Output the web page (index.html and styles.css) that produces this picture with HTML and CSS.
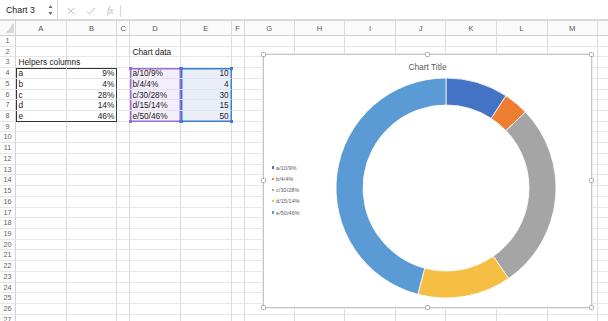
FILE: index.html
```html
<!DOCTYPE html>
<html lang="en">
<head>
<meta charset="utf-8">
<title>Chart 3</title>
<link rel="stylesheet" href="styles.css">
</head>
<body>
<div class="formula-bar">
  <div class="name-box">
    <span class="name">Chart 3</span>
    <svg class="spin" width="5" height="12" viewBox="0 0 5 12"><path d="M2.5 1 L4.5 4 L0.5 4 Z M0.5 8 L4.5 8 L2.5 11 Z" fill="#6b6b6b"/></svg>
  </div>
  <div class="tools">
    <svg class="ic-x" width="8" height="8" viewBox="0 0 8 8"><path d="M0.8 0.8 L7.2 7.2 M7.2 0.8 L0.8 7.2" stroke="#c3c3c3" stroke-width="1" fill="none"/></svg>
    <svg class="ic-ok" width="10" height="8" viewBox="0 0 10 8"><path d="M0.8 4.2 L3.6 7 L9.2 0.8" stroke="#c3c3c3" stroke-width="1" fill="none"/></svg>
    <span class="fx">fx</span>
    <span class="divider"></span>
  </div>
  <div class="formula-input"></div>
</div>

<div class="sheet-wrap">
  <div class="sheet">
    <div class="corner"></div>
    <div class="ch">A</div><div class="ch">B</div><div class="ch">C</div><div class="ch">D</div><div class="ch">E</div><div class="ch">F</div><div class="ch">G</div><div class="ch">H</div><div class="ch">I</div><div class="ch">J</div><div class="ch">K</div><div class="ch">L</div><div class="ch">M</div><div class="ch">N</div>

    <div class="rh">1</div><div class="c"></div><div class="c"></div><div class="c"></div><div class="c"></div><div class="c"></div><div class="c"></div><div class="c"></div><div class="c"></div><div class="c"></div><div class="c"></div><div class="c"></div><div class="c"></div><div class="c"></div><div class="c"></div>
    <div class="rh">2</div><div class="c"></div><div class="c"></div><div class="c"></div><div class="c">Chart data</div><div class="c"></div><div class="c"></div><div class="c"></div><div class="c"></div><div class="c"></div><div class="c"></div><div class="c"></div><div class="c"></div><div class="c"></div><div class="c"></div>
    <div class="rh">3</div><div class="c">Helpers columns</div><div class="c"></div><div class="c"></div><div class="c"></div><div class="c"></div><div class="c"></div><div class="c"></div><div class="c"></div><div class="c"></div><div class="c"></div><div class="c"></div><div class="c"></div><div class="c"></div><div class="c"></div>
    <div class="rh">4</div><div class="c bxLT">a</div><div class="c num bxT bxR">9%</div><div class="c"></div><div class="c sp first">a/10/9%</div><div class="c num sb first">10</div><div class="c"></div><div class="c"></div><div class="c"></div><div class="c"></div><div class="c"></div><div class="c"></div><div class="c"></div><div class="c"></div><div class="c"></div>
    <div class="rh">5</div><div class="c bxL">b</div><div class="c num bxR">4%</div><div class="c"></div><div class="c sp">b/4/4%</div><div class="c num sb">4</div><div class="c"></div><div class="c"></div><div class="c"></div><div class="c"></div><div class="c"></div><div class="c"></div><div class="c"></div><div class="c"></div><div class="c"></div>
    <div class="rh">6</div><div class="c bxL">c</div><div class="c num bxR">28%</div><div class="c"></div><div class="c sp">c/30/28%</div><div class="c num sb">30</div><div class="c"></div><div class="c"></div><div class="c"></div><div class="c"></div><div class="c"></div><div class="c"></div><div class="c"></div><div class="c"></div><div class="c"></div>
    <div class="rh">7</div><div class="c bxL">d</div><div class="c num bxR">14%</div><div class="c"></div><div class="c sp">d/15/14%</div><div class="c num sb">15</div><div class="c"></div><div class="c"></div><div class="c"></div><div class="c"></div><div class="c"></div><div class="c"></div><div class="c"></div><div class="c"></div><div class="c"></div>
    <div class="rh">8</div><div class="c bxL bxB">e</div><div class="c num bxR bxB">46%</div><div class="c"></div><div class="c sp last">e/50/46%</div><div class="c num sb last">50</div><div class="c"></div><div class="c"></div><div class="c"></div><div class="c"></div><div class="c"></div><div class="c"></div><div class="c"></div><div class="c"></div><div class="c"></div>
    <div class="rh">9</div><div class="c"></div><div class="c"></div><div class="c"></div><div class="c"></div><div class="c"></div><div class="c"></div><div class="c"></div><div class="c"></div><div class="c"></div><div class="c"></div><div class="c"></div><div class="c"></div><div class="c"></div><div class="c"></div>
    <div class="rh">10</div><div class="c"></div><div class="c"></div><div class="c"></div><div class="c"></div><div class="c"></div><div class="c"></div><div class="c"></div><div class="c"></div><div class="c"></div><div class="c"></div><div class="c"></div><div class="c"></div><div class="c"></div><div class="c"></div>
    <div class="rh">11</div><div class="c"></div><div class="c"></div><div class="c"></div><div class="c"></div><div class="c"></div><div class="c"></div><div class="c"></div><div class="c"></div><div class="c"></div><div class="c"></div><div class="c"></div><div class="c"></div><div class="c"></div><div class="c"></div>
    <div class="rh">12</div><div class="c"></div><div class="c"></div><div class="c"></div><div class="c"></div><div class="c"></div><div class="c"></div><div class="c"></div><div class="c"></div><div class="c"></div><div class="c"></div><div class="c"></div><div class="c"></div><div class="c"></div><div class="c"></div>
    <div class="rh">13</div><div class="c"></div><div class="c"></div><div class="c"></div><div class="c"></div><div class="c"></div><div class="c"></div><div class="c"></div><div class="c"></div><div class="c"></div><div class="c"></div><div class="c"></div><div class="c"></div><div class="c"></div><div class="c"></div>
    <div class="rh">14</div><div class="c"></div><div class="c"></div><div class="c"></div><div class="c"></div><div class="c"></div><div class="c"></div><div class="c"></div><div class="c"></div><div class="c"></div><div class="c"></div><div class="c"></div><div class="c"></div><div class="c"></div><div class="c"></div>
    <div class="rh">15</div><div class="c"></div><div class="c"></div><div class="c"></div><div class="c"></div><div class="c"></div><div class="c"></div><div class="c"></div><div class="c"></div><div class="c"></div><div class="c"></div><div class="c"></div><div class="c"></div><div class="c"></div><div class="c"></div>
    <div class="rh">16</div><div class="c"></div><div class="c"></div><div class="c"></div><div class="c"></div><div class="c"></div><div class="c"></div><div class="c"></div><div class="c"></div><div class="c"></div><div class="c"></div><div class="c"></div><div class="c"></div><div class="c"></div><div class="c"></div>
    <div class="rh">17</div><div class="c"></div><div class="c"></div><div class="c"></div><div class="c"></div><div class="c"></div><div class="c"></div><div class="c"></div><div class="c"></div><div class="c"></div><div class="c"></div><div class="c"></div><div class="c"></div><div class="c"></div><div class="c"></div>
    <div class="rh">18</div><div class="c"></div><div class="c"></div><div class="c"></div><div class="c"></div><div class="c"></div><div class="c"></div><div class="c"></div><div class="c"></div><div class="c"></div><div class="c"></div><div class="c"></div><div class="c"></div><div class="c"></div><div class="c"></div>
    <div class="rh">19</div><div class="c"></div><div class="c"></div><div class="c"></div><div class="c"></div><div class="c"></div><div class="c"></div><div class="c"></div><div class="c"></div><div class="c"></div><div class="c"></div><div class="c"></div><div class="c"></div><div class="c"></div><div class="c"></div>
    <div class="rh">20</div><div class="c"></div><div class="c"></div><div class="c"></div><div class="c"></div><div class="c"></div><div class="c"></div><div class="c"></div><div class="c"></div><div class="c"></div><div class="c"></div><div class="c"></div><div class="c"></div><div class="c"></div><div class="c"></div>
    <div class="rh">21</div><div class="c"></div><div class="c"></div><div class="c"></div><div class="c"></div><div class="c"></div><div class="c"></div><div class="c"></div><div class="c"></div><div class="c"></div><div class="c"></div><div class="c"></div><div class="c"></div><div class="c"></div><div class="c"></div>
    <div class="rh">22</div><div class="c"></div><div class="c"></div><div class="c"></div><div class="c"></div><div class="c"></div><div class="c"></div><div class="c"></div><div class="c"></div><div class="c"></div><div class="c"></div><div class="c"></div><div class="c"></div><div class="c"></div><div class="c"></div>
    <div class="rh">23</div><div class="c"></div><div class="c"></div><div class="c"></div><div class="c"></div><div class="c"></div><div class="c"></div><div class="c"></div><div class="c"></div><div class="c"></div><div class="c"></div><div class="c"></div><div class="c"></div><div class="c"></div><div class="c"></div>
    <div class="rh">24</div><div class="c"></div><div class="c"></div><div class="c"></div><div class="c"></div><div class="c"></div><div class="c"></div><div class="c"></div><div class="c"></div><div class="c"></div><div class="c"></div><div class="c"></div><div class="c"></div><div class="c"></div><div class="c"></div>
    <div class="rh">25</div><div class="c"></div><div class="c"></div><div class="c"></div><div class="c"></div><div class="c"></div><div class="c"></div><div class="c"></div><div class="c"></div><div class="c"></div><div class="c"></div><div class="c"></div><div class="c"></div><div class="c"></div><div class="c"></div>
    <div class="rh">26</div><div class="c"></div><div class="c"></div><div class="c"></div><div class="c"></div><div class="c"></div><div class="c"></div><div class="c"></div><div class="c"></div><div class="c"></div><div class="c"></div><div class="c"></div><div class="c"></div><div class="c"></div><div class="c"></div>
    <div class="rh">27</div><div class="c"></div><div class="c"></div><div class="c"></div><div class="c"></div><div class="c"></div><div class="c"></div><div class="c"></div><div class="c"></div><div class="c"></div><div class="c"></div><div class="c"></div><div class="c"></div><div class="c"></div><div class="c"></div>
  </div>

  <div class="chart">
    <span class="hd h-tl"></span><span class="hd h-tm"></span><span class="hd h-tr"></span>
    <span class="hd h-ml"></span><span class="hd h-mr"></span>
    <span class="hd h-bl"></span><span class="hd h-bm"></span><span class="hd h-br"></span>
    <div class="chart-title">Chart Title</div>
    <div class="chart-body">
      <ul class="legend">
        <li><span class="mk mk-a"></span>a/10/9%</li>
        <li><span class="mk mk-b"></span>b/4/4%</li>
        <li><span class="mk mk-c"></span>c/30/28%</li>
        <li><span class="mk mk-d"></span>d/15/14%</li>
        <li><span class="mk mk-e"></span>e/50/46%</li>
      </ul>
      <svg class="donut" width="220" height="220" viewBox="0 0 220 220">
        <g stroke="#ffffff" stroke-width="0.8" stroke-linejoin="round">
          <path fill="#4472C4" d="M110 0 A110 110 0 0 1 169.96 17.78 L155.24 40.41 A83 83 0 0 0 110 27 Z"/>
          <path fill="#ED7D31" d="M169.96 17.78 A110 110 0 0 1 189.45 33.92 L169.95 52.59 A83 83 0 0 0 155.24 40.41 Z"/>
          <path fill="#A5A5A5" d="M189.45 33.92 A110 110 0 0 1 172.59 200.46 L157.23 178.26 A83 83 0 0 0 169.95 52.59 Z"/>
          <path fill="#F7BE44" d="M172.59 200.46 A110 110 0 0 1 81.79 216.32 L88.71 190.22 A83 83 0 0 0 157.23 178.26 Z"/>
          <path fill="#5B9BD5" d="M81.79 216.32 A110 110 0 0 1 110 0 L110 27 A83 83 0 0 0 88.71 190.22 Z"/>
        </g>
      </svg>
    </div>
  </div>
</div>
</body>
</html>
```

FILE: styles.css
```css
* { box-sizing: border-box; margin: 0; padding: 0; }
html, body { width: 608px; height: 321px; overflow: hidden; background: #ffffff; }
body { font-family: "Liberation Sans", Arial, sans-serif; color: #1c1c1c; }

/* formula bar */
.formula-bar {
  height: 21px;
  display: flex;
  align-items: stretch;
  border-bottom: 2px solid #d9d9d9;
  background: #ffffff;
}
.name-box {
  width: 58px;
  display: flex;
  align-items: center;
  justify-content: space-between;
  padding: 1px 4px 0 6px;
  border-right: 1px solid #d6d6d6;
  font-size: 8.8px;
  color: #222222;
}
.tools {
  display: flex;
  align-items: center;
  padding: 2px 0 0 9px;
}
.ic-x { margin-right: 11px; }
.ic-ok { margin-right: 11px; }
.fx {
  font-family: "Liberation Serif", "Times New Roman", serif;
  font-style: italic;
  font-size: 10px;
  color: #bdbdbd;
  width: 10px;
  letter-spacing: -0.5px;
}
.divider {
  width: 1px;
  height: 12px;
  background: #dadada;
  margin-left: 3px;
}
.formula-input { flex: 1; }

/* sheet */
.sheet-wrap {
  position: relative;
  height: 300px;
  overflow: hidden;
}
.sheet {
  display: grid;
  grid-template-columns: 16px 50.7px 50.6px 12.7px 51px 50.7px 13px 50.3px 50.3px 50.7px 50.3px 50.7px 50.6px 50.4px 50px;
  grid-template-rows: 15px repeat(27, 10.73px);
  width: 680px;
}
.corner {
  background: #fafafa linear-gradient(to bottom right, transparent 50%, #d7d7d7 50%) no-repeat right 1px bottom 2px / 8px 11px;
  border-right: 1px solid #d4d4d4;
  border-bottom: 1px solid #cfcfcf;
}
.ch {
  background: #fafafa;
  font-size: 7.6px;
  color: #555555;
  text-align: center;
  line-height: 15px;
  border-right: 1px solid #dcdcdc;
  border-bottom: 1px solid #cfcfcf;
}
.rh {
  font-size: 7.2px;
  color: #666666;
  text-align: center;
  line-height: 10px;
  border-right: 1px solid #d4d4d4;
  border-bottom: 1px solid #e6e6e6;
  background: #fcfcfc;
}
.c {
  font-size: 8.3px;
  line-height: 10.2px;
  padding: 0 2px 0 2.5px;
  white-space: nowrap;
  border-right: 1px solid #dcdcdc;
  border-bottom: 1px solid #e7e7e7;
  color: #1c1c1c;
}
.num { text-align: right; padding-right: 2px; }

/* helper range box */
.bxL { box-shadow: inset 1px 0 #333333; }
.bxLT { box-shadow: inset 1px 0 #333333, inset 0 1px #333333; }
.bxT { box-shadow: inset 0 1px #333333; }
.bxR { border-right-color: #333333; }
.bxB { border-bottom-color: #333333; }

/* selected chart data ranges */
.sp {
  background: #f3eef9;
  border-right-color: #9a6fd2;
  border-bottom-color: #e5dcf1;
  box-shadow: inset 1.5px 0 #9a6fd2, inset -0.5px 0 #9a6fd2;
}
.sb {
  background: #e9eef9;
  border-right-color: #3b7cd6;
  border-bottom-color: #dbe3f3;
  box-shadow: inset 1.5px 0 #3b7cd6, inset -0.5px 0 #3b7cd6;
}
.sp.first { box-shadow: inset 1.5px 0 #9a6fd2, inset -0.5px 0 #9a6fd2, inset 0 1.5px #9a6fd2; }
.sb.first { box-shadow: inset 1.5px 0 #3b7cd6, inset -0.5px 0 #3b7cd6, inset 0 1.5px #3b7cd6; }
.sp.last { border-bottom-color: #9a6fd2; box-shadow: inset 1.5px 0 #9a6fd2, inset -0.5px 0 #9a6fd2, inset 0 -0.5px #9a6fd2; }
.sb.last { border-bottom-color: #3b7cd6; box-shadow: inset 1.5px 0 #3b7cd6, inset -0.5px 0 #3b7cd6, inset 0 -0.5px #3b7cd6; }
.first, .last { position: relative; }
.first::before, .first::after, .last::before, .last::after {
  content: "";
  position: absolute;
  width: 3px;
  height: 3px;
  z-index: 1;
}
.sp::before, .sp::after { background: #9a6fd2; }
.sb::before, .sb::after { background: #3b7cd6; }
.first::before { left: -1px; top: -1.5px; }
.first::after { right: -2px; top: -1.5px; }
.last::before { left: -1px; bottom: -2px; }
.last::after { right: -2px; bottom: -2px; }

/* chart overlay */
.chart {
  position: absolute;
  left: 263px;
  top: 32.5px;
  width: 329px;
  height: 254px;
  background: #ffffff;
  border: 1px solid #c4c4c4;
  box-shadow: 0 0 0 1px #ececec;
  z-index: 2;
  display: flex;
  flex-direction: column;
}
.hd {
  position: absolute;
  width: 5px;
  height: 5px;
  background: #ffffff;
  border: 1px solid #a6a6a6;
  border-radius: 1.5px;
}
.h-tl { left: -3px; top: -3px; }
.h-tm { left: calc(50% - 2.5px); top: -3px; }
.h-tr { right: -3px; top: -3px; }
.h-ml { left: -3px; top: calc(50% - 2.5px); }
.h-mr { right: -3px; top: calc(50% - 2.5px); }
.h-bl { left: -3px; bottom: -3px; }
.h-bm { left: calc(50% - 2.5px); bottom: -3px; }
.h-br { right: -3px; bottom: -3px; }

.chart-title {
  height: 23.5px;
  line-height: 25px;
  text-align: center;
  font-size: 8.4px;
  color: #595959;
}
.chart-body {
  display: flex;
  align-items: center;
  height: 220px;
}
.legend {
  list-style: none;
  width: 72px;
  padding: 4px 0 0 7.5px;
  font-size: 5.4px;
  letter-spacing: 0.1px;
  color: #595959;
}
.legend li {
  display: flex;
  align-items: center;
  height: 11.25px;
}
.mk {
  width: 2.4px;
  height: 2.4px;
  margin-right: 2.2px;
}
.mk-a { background: #4472C4; }
.mk-b { background: #ED7D31; }
.mk-c { background: #A5A5A5; }
.mk-d { background: #F7BE44; }
.mk-e { background: #5B9BD5; }
.donut { display: block; flex: none; }
```
